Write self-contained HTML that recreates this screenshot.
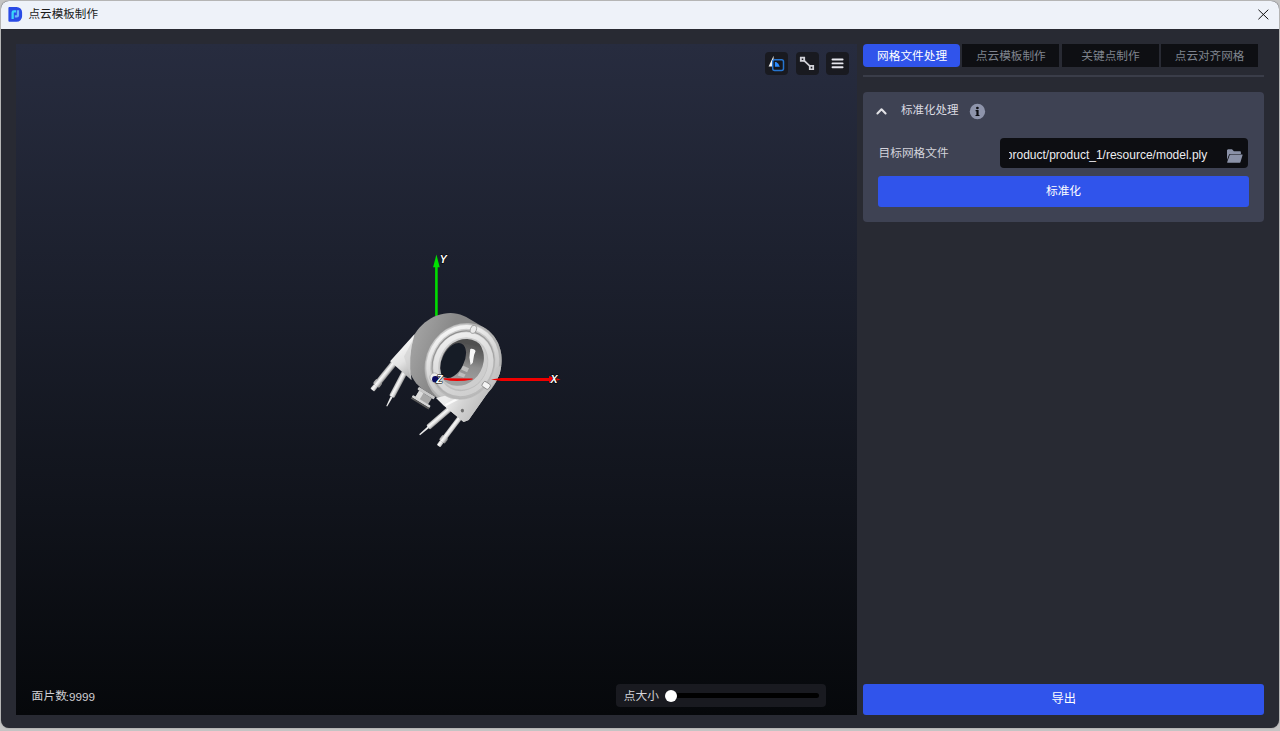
<!DOCTYPE html>
<html lang="zh-CN">
<head>
<meta charset="utf-8">
<title>点云模板制作</title>
<style>
html,body{margin:0;padding:0;}
body{width:1280px;height:731px;overflow:hidden;position:relative;background:#c4c4c4;
  font-family:"Liberation Sans","Noto Sans CJK SC",sans-serif;font-size:12px;}
#win{position:absolute;left:1px;top:1px;width:1278px;height:727.4px;border-radius:8px;
  background:#282a33;overflow:hidden;box-shadow:0 0 1.5px rgba(0,0,0,.4);}
/* everything inside #page is positioned in page pixel coordinates */
#page{position:absolute;left:-1px;top:-1px;width:1280px;height:731px;}
#page>*{position:absolute;}
#titlebar{left:0;top:0;width:1280px;height:29px;background:#eef2f9;}
#viewport{left:16px;top:44px;width:841px;height:671px;
  background:linear-gradient(180deg,#272c3f 0%,#06080b 100%);}
.tbtn{top:52.3px;width:22.5px;height:22.4px;border-radius:4px;background:#191a20;}
.tab{top:44.1px;width:97px;height:22.9px;background:#0e0f13;}
.tab.on{background:#3054eb;border-radius:4px;}
#tabline{left:863px;top:75px;width:401px;height:1.9px;background:#3a3d49;}
#card{left:863px;top:92.3px;width:401px;height:129.7px;border-radius:4px;background:#3e4253;}
#input{left:1000.2px;top:138.3px;width:248px;height:29.6px;border-radius:4px;background:#0d0e12;}
.bbtn{background:#3054eb;border-radius:3px;}
#norm{left:878px;top:176.2px;width:370.5px;height:30.6px;}
#export{left:863px;top:684px;width:401px;height:31px;}
#sliderbox{left:616px;top:684.4px;width:210px;height:22.6px;border-radius:4px;background:#191a20;}
#track{left:668px;top:692.8px;width:150.5px;height:5.6px;border-radius:3px;background:#000;}
#knob{left:665.2px;top:689.5px;width:12px;height:12px;border-radius:50%;background:#fff;}
/* text runs: real text */
.t{overflow:visible;font-family:"Liberation Sans","Noto Sans CJK SC",sans-serif;}
.t>span{position:absolute;left:0;top:-1.2px;white-space:nowrap;line-height:1.2;}
.lat{white-space:nowrap;line-height:1;}
svg{overflow:visible;}
</style>
</head>
<body>
<div id="win"><div id="page">

  <div id="titlebar"></div>
  <div class="t " style="left:28.50px;top:8.75px;width:68.60px;height:10.70px"><span style="font-size:11.59px;color:#1b1b1b">点云模板制作</span></div>

  <div id="viewport"></div>
  <svg id="model" style="left:0;top:0" width="1280" height="731" viewBox="0 0 1280 731">
  <defs>
    <filter id="soft" x="-5%" y="-5%" width="110%" height="110%"><feGaussianBlur stdDeviation="0.45"/></filter>
    <linearGradient id="gBand" gradientUnits="userSpaceOnUse" x1="409" y1="350" x2="440" y2="362">
      <stop offset="0" stop-color="#a2a2a2"/><stop offset=".5" stop-color="#959595"/><stop offset="1" stop-color="#888888"/>
    </linearGradient>
    <linearGradient id="gPinA" gradientUnits="userSpaceOnUse" x1="-2.8" y1="0" x2="2.8" y2="0">
      <stop offset="0" stop-color="#b0b0b0"/><stop offset=".35" stop-color="#fafafa"/><stop offset=".7" stop-color="#dadada"/><stop offset="1" stop-color="#909090"/>
    </linearGradient>
    <linearGradient id="gPlate" gradientUnits="userSpaceOnUse" x1="447" y1="400" x2="478" y2="418">
      <stop offset="0" stop-color="#ececec"/><stop offset=".4" stop-color="#d4d4d4"/><stop offset="1" stop-color="#bcbcbc"/>
    </linearGradient>
    <linearGradient id="gBracket" gradientUnits="userSpaceOnUse" x1="395" y1="345" x2="415" y2="372">
      <stop offset="0" stop-color="#fafafa"/><stop offset=".55" stop-color="#e2e2e2"/><stop offset="1" stop-color="#b4b4b4"/>
    </linearGradient>
    <radialGradient id="gFace" gradientUnits="userSpaceOnUse" cx="448" cy="350" r="62">
      <stop offset="0" stop-color="#d2d2d2"/><stop offset=".62" stop-color="#c4c4c4"/><stop offset="1" stop-color="#adadad"/>
    </radialGradient>
    <linearGradient id="gWall" gradientUnits="userSpaceOnUse" x1="466" y1="340" x2="478" y2="378">
      <stop offset="0" stop-color="#505050"/><stop offset=".3" stop-color="#6c6c6c"/><stop offset=".55" stop-color="#8e8e8e"/><stop offset="1" stop-color="#a0a0a0"/>
    </linearGradient>
    <linearGradient id="gRim" gradientUnits="userSpaceOnUse" x1="428" y1="335" x2="498" y2="388">
      <stop offset="0" stop-color="#fbfbfb"/><stop offset=".4" stop-color="#dedede"/><stop offset="1" stop-color="#c2c2c2" stop-opacity=".3"/>
    </linearGradient>
    <linearGradient id="gGroove" gradientUnits="userSpaceOnUse" x1="430" y1="340" x2="495" y2="385">
      <stop offset="0" stop-color="#8a8a8a"/><stop offset=".6" stop-color="#a6a6a6"/><stop offset="1" stop-color="#c4c4c4" stop-opacity=".5"/>
    </linearGradient>
    <linearGradient id="gRing" gradientUnits="userSpaceOnUse" x1="432" y1="340" x2="492" y2="388">
      <stop offset="0" stop-color="#f4f4f4"/><stop offset=".5" stop-color="#dcdcdc"/><stop offset="1" stop-color="#cccccc"/>
    </linearGradient>
    <clipPath id="cHole"><ellipse cx="463.8" cy="364.3" rx="23.0" ry="26.0" transform="rotate(28.3 463.8 364.3)" /></clipPath>
    <clipPath id="cOutside"><path clip-rule="evenodd" d="M380 300H540V440H380zM491.6 379.4 490.0 382.2 488.1 384.8 486.1 387.2 483.9 389.5 481.6 391.6 479.1 393.5 476.5 395.1 473.8 396.5 471.0 397.7 468.2 398.6 465.3 399.2 462.4 399.6 459.5 399.7 456.6 399.5 453.8 399.1 451.0 398.4 448.3 397.5 445.8 396.2 443.4 394.8 441.1 393.1 439.0 391.2 437.1 389.1 435.4 386.7 433.9 384.3 432.6 381.6 431.5 378.9 430.7 376.0 430.2 373.0 429.8 370.0 429.8 366.9 430.0 363.8 430.4 360.7 431.1 357.6 432.0 354.6 433.2 351.6 434.6 348.8 436.2 346.0 438.1 343.4 440.1 341.0 442.3 338.7 444.6 336.6 447.1 334.7 449.7 333.1 452.4 331.7 455.2 330.5 458.0 329.6 460.9 329.0 463.8 328.6 466.7 328.5 469.6 328.7 472.4 329.1 475.2 329.8 477.9 330.7 480.4 332.0 482.8 333.4 485.1 335.1 487.2 337.0 489.1 339.1 490.8 341.5 492.3 343.9 493.6 346.6 494.7 349.3 495.5 352.2 496.0 355.2 496.4 358.2 496.4 361.3 496.2 364.4 495.8 367.5 495.1 370.6 494.2 373.6 493.0 376.6z"/></clipPath>
  </defs>

  <!-- Y axis (behind model) -->
  <path d="M436.4 266v50" stroke="#00dc00" stroke-width="2.6" fill="none"/>
  <path d="M436.4 254.6l3.3 12.6h-6.6z" fill="#00e000"/>

  <g filter="url(#soft)">
    <!-- upper-left pins (behind bracket) -->
    <g transform="translate(392.8 364.5) rotate(38.8)">
      <rect x="-3.1" y="-2" width="6.2" height="23.5" fill="url(#gPinA)"/>
      <rect x="-3.9" y="21" width="7.8" height="6.2" rx="1.6" fill="url(#gPinA)"/>
      <rect x="-2.5" y="27" width="5" height="5.8" rx=".9" fill="url(#gPinA)"/>
    </g>
    <g transform="translate(403.8 373.8) rotate(27.8)">
      <rect x="-2.9" y="-2" width="5.8" height="28" rx="1.2" fill="url(#gPinA)"/>
      <path d="M-1.1 26h2.2l-.6 10.6h-1z" fill="#ececec"/>
    </g>
    <!-- spool / nozzle -->
    <g transform="translate(423.2 398.2) rotate(31.5)">
      <rect x="-9.6" y="-7.6" width="19.2" height="3.2" rx="1" fill="#c8c8c8"/>
      <rect x="-7.4" y="-4.6" width="14.8" height="7.6" fill="#a8a8a8"/>
      <rect x="-7.4" y="-4.6" width="5" height="7.6" fill="#dcdcdc"/>
      <rect x="-10.4" y="2.6" width="20.8" height="2.6" rx="1" fill="#d6d6d6"/>
      <rect x="-10.4" y="5.2" width="20.8" height="1.6" fill="#5a5a5a"/>
    </g>

    <!-- lower pins (behind plate) -->
    <g transform="translate(448.3 410.1) rotate(49.3)">
      <rect x="-2.9" y="-3" width="5.8" height="29.6" rx="1.2" fill="url(#gPinA)"/>
      <path d="M-1 26.4h2l-.4 11.4h-1.2z" fill="#ececec"/>
    </g>
    <g transform="translate(458.4 419.7) rotate(37.1)">
      <rect x="-2.5" y="-3" width="5" height="24.8" fill="url(#gPinA)"/>
      <rect x="-3.5" y="21.2" width="7" height="6.6" rx="1.5" fill="url(#gPinA)"/>
      <rect x="-2.2" y="27.6" width="4.4" height="5.4" rx=".9" fill="url(#gPinA)"/>
    </g>

    <!-- band (outer cylindrical side): hull of front and back rims -->
    <path d="M407.8 361.1 407.7 357.5 407.9 353.9 408.4 350.3 409.2 346.8 410.3 343.3 411.7 339.9 413.3 336.6 415.1 333.4 417.2 330.4 419.6 327.6 422.1 324.9 424.8 322.5 427.7 320.4 430.7 318.5 433.8 316.8 437.1 315.5 440.4 314.4 443.7 313.7 447.1 313.3 450.4 313.1 453.7 313.3 457.0 313.8 460.2 314.6 463.3 315.7 466.2 317.1 483.1 326.9 485.9 328.6 488.5 330.6 490.9 332.8 493.2 335.2 495.1 337.9 496.9 340.8 498.4 343.8 499.6 347.0 500.5 350.4 501.2 353.8 501.5 357.3 501.6 360.9 501.4 364.5 500.9 368.1 500.1 371.6 499.0 375.1 497.6 378.5 496.0 381.8 494.2 385.0 492.1 388.0 489.7 390.8 487.2 393.5 484.5 395.9 481.6 398.0 478.6 399.9 475.5 401.6 472.2 402.9 468.9 404.0 465.6 404.7 462.2 405.1 458.9 405.3 455.6 405.1 452.3 404.6 449.1 403.8 446.0 402.7 443.1 401.3 426.2 391.5 423.4 389.8 420.8 387.8 418.4 385.6 416.1 383.2 414.2 380.5 412.4 377.6 410.9 374.6 409.7 371.4 408.8 368.0 408.1 364.6z" fill="url(#gBand)"/>

    <!-- left bracket -->
    <path d="M414.6 334L390.1 361.2 411.6 380.2 Q407.4 357 414.6 334z" fill="url(#gBracket)"/>
    <path d="M413.4 339L404 356.5 411.2 379.4Q408 357 413.4 339z" fill="#cfcfcf" opacity=".6"/>

    <!-- lower-right plate -->
    <path d="M442.6 404.4L463.6 422.1 468.7 420 495 382.6C497.6 378.6 499.4 375 500.4 371L470 392z" fill="url(#gPlate)"/>
    <path d="M447.4 405.8L478 389.4 474.6 388.4 445.6 403.2z" fill="#fbfbfb"/>
    <ellipse cx="462.4" cy="410.6" rx="1.6" ry="1.9" fill="#6e6e6e"/>

    <!-- front face : outer rim, groove, inner ring -->
    <ellipse cx="463.1" cy="364.1" rx="37.4" ry="42.2" transform="rotate(28.3 463.1 364.1)" fill="#b2b2b2"/>
    <ellipse cx="462.1" cy="363.2" rx="35.7" ry="40.3" transform="rotate(28.3 462.1 363.2)" fill="url(#gFace)"/>
    <ellipse cx="462.8" cy="363.9" rx="33.5" ry="37.8" transform="rotate(28.3 462.8 363.9)" fill="none" stroke="url(#gRim)" stroke-width="3.8"/>
    <!-- mounting plate, flush with the front face (covers lower-right rim) -->
    <g clip-path="url(#cOutside)"><path d="M436 398L442.6 404.4 463.6 422.1 468.7 420 495 382.600C498.500 377.500 500.600 372 501.200 366L476 372 452 394z" fill="url(#gPlate)"/><path d="M446.200 404.800L476.500 389.200" stroke="#fcfcfc" stroke-width="2.200" stroke-linecap="round" opacity=".95"/></g>
    <ellipse cx="462.4" cy="410.6" rx="1.6" ry="1.9" fill="#707070"/>
    <ellipse cx="463.1" cy="364.1" rx="30.1" ry="34.0" transform="rotate(28.3 463.1 364.1)" fill="none" stroke="url(#gGroove)" stroke-width="1.2"/>
    <ellipse cx="463.3" cy="364.2" rx="26.7" ry="30.2" transform="rotate(28.3 463.3 364.2)" fill="none" stroke="url(#gRing)" stroke-width="5.0"/>
    <!-- boss around Z -->
    <circle cx="434.4" cy="377.4" r="4.5" fill="#ececec" stroke="#a8a8a8" stroke-width=".7"/>
    <!-- hole: lit lower wall, shaded upper wall, see-through lens -->
    <ellipse cx="463.8" cy="364.3" rx="23.0" ry="26.0" transform="rotate(28.3 463.8 364.3)" fill="#cecece"/>
    <g clip-path="url(#cHole)">
      <ellipse cx="460.2" cy="360.5" rx="23.0" ry="26.0" transform="rotate(28.3 460.2 360.5)" fill="url(#gWall)"/>
      <path d="M470.2 349.2c1.9-.9 4.2.1 5.4 1.900l-1.500 3.900-1.300 7.800-2.200 2.200-1.200-7.600z" fill="#f6f6f6"/>
      <path d="M462.800 365.600l6.200 2.600-1.900 4-6-2.600zM459.600 372l6 2.400-1.700 3.100-6.200-2.100z" fill="#bebebe"/>
      <ellipse cx="453.1" cy="360.5" rx="10.9" ry="18.9" transform="rotate(27 453.1 360.5)" fill="#171b26"/>
    </g>

    <!-- small peg -->
    <g transform="translate(486.2 385.4) rotate(33)">
      <rect x="-3.9" y="-2.9" width="7.8" height="5.8" rx="1.8" fill="#f4f4f4" stroke="#808080" stroke-width=".8"/>
    </g>
    <!-- top boss -->
    <ellipse cx="473.4" cy="329.4" rx="3" ry="4.2" transform="rotate(20 473.4 329.4)" fill="#e9e9e9" stroke="#9a9a9a" stroke-width=".8"/>
  </g>

  <!-- X axis -->
  <path d="M443.8 378.2L472.6 378.6 472.6 379.4Q456 382.4 443.8 379.4z" fill="#f00000"/>
  <path d="M491 379.4L501 378H550V381H501z" fill="#f00000"/>
  <path d="M560.6 379.5L549 375.9v7.2z" fill="#ee0000"/>
  <!-- Z axis dot -->
  <circle cx="435.4" cy="379.2" r="3.3" fill="#0a0a62"/>
  <!-- axis labels X / Y / Z -->
  <g font-family="'Liberation Sans', sans-serif" font-size="10.5" font-weight="bold" font-style="italic" fill="#fff" stroke="#000" stroke-width="1.2" paint-order="stroke" stroke-linejoin="round">
    <text x="439.7" y="262.9">Y</text>
    <text x="550.6" y="383">X</text>
    <text x="436.2" y="383.1">Z</text>
  </g>
</svg>


  <div class="tbtn" style="left:765.3px"></div>
  <div class="tbtn" style="left:796.0px"></div>
  <div class="tbtn" style="left:826.3px"></div>

  <div class="tab on" style="left:863px"></div>
  <div class="tab" style="left:962.2px"></div>
  <div class="tab" style="left:1061.5px"></div>
  <div class="tab" style="left:1160.8px"></div>
  <div class="t " style="left:877.10px;top:50.59px;width:68.60px;height:10.83px"><span style="font-size:11.67px;color:#ffffff">网格文件处理</span></div><div class="t " style="left:975.90px;top:50.63px;width:68.90px;height:10.74px"><span style="font-size:11.64px;color:#7f848e">点云模板制作</span></div><div class="t " style="left:1081.30px;top:50.58px;width:57.40px;height:10.84px"><span style="font-size:11.68px;color:#7f848e">关键点制作</span></div><div class="t " style="left:1174.80px;top:50.62px;width:68.90px;height:10.76px"><span style="font-size:11.61px;color:#7f848e">点云对齐网格</span></div>
  <div id="tabline"></div>

  <div id="card"></div>
  <div class="t " style="left:901.00px;top:105.60px;width:56.90px;height:10.60px"><span style="font-size:11.51px;color:#dcdce2">标准化处理</span></div>
  <div class="t " style="left:878.60px;top:147.68px;width:67.70px;height:10.84px"><span style="font-size:11.68px;color:#d4d4dc">目标网格文件</span></div>
  <div id="input"></div>
  <div id="norm" class="bbtn"></div>
  <div class="t " style="left:1045.90px;top:185.60px;width:34.50px;height:10.80px"><span style="font-size:11.74px;color:#ffffff">标准化</span></div>

  <div id="export" class="bbtn"></div>
  <div class="t " style="left:1051.60px;top:693.12px;width:22.50px;height:11.26px"><span style="font-size:12.27px;color:#ffffff">导出</span></div>

  <div class="t " style="left:31.60px;top:689.95px;width:34.40px;height:10.91px"><span style="font-size:11.81px;color:#cfcfd3">面片数</span></div>
  <div class="t" style="left:64px;top:686px;width:36px;height:18px"><span class="lat" style="font-size:11.7px;left:1.8px;top:3.6px;color:#cfcfd3">:9999</span></div>

  <div id="sliderbox"></div>
  <div class="t " style="left:623.70px;top:690.19px;width:34.50px;height:10.82px"><span style="font-size:11.76px;color:#d4d4d8">点大小</span></div>
  <div id="track"></div>
  <div id="knob"></div>

  <svg id="icons" style="left:0;top:0" width="1280" height="731" viewBox="0 0 1280 731">
  <!-- app icon -->
  <path d="M9.4 7h7.2a5.5 5.5 0 0 1 5.5 5.5v3.8a5.5 5.5 0 0 1-5.5 5.5H9.4a1 1 0 0 1-1-1V8a1 1 0 0 1 1-1z" fill="#2a4be6"/>
  <path d="M11.5 18.9v-6.5a2.2 2.2 0 0 1 2.2-2.2h2.4v2.3h-2.0a.3.3 0 0 0-.3.3v6.1z" fill="#38d6f8"/>
  <path d="M19.1 10.2v5.1a2.2 2.2 0 0 1-2.2 2.2h-2.1v-2.3h1.7a.3.3 0 0 0 .3-.3v-4.7z" fill="#6cb6f7"/>
  <!-- close -->
  <path d="M1258.4 9.7l9.9 9.6M1268.3 9.700l-9.900 9.600" stroke="#111" stroke-width="1" fill="none"/>

  <!-- toolbar 1: view / projection -->
  <path d="M773.6 55.8L768.6 66.4H773z" fill="#f4f4f4"/><path d="M773.6 55.800L773 66.400H775.600z" fill="#a9a39a"/>
  <rect x="772.7" y="59.7" width="10.8" height="10.8" rx="2" fill="#15161b" stroke="#2674cf" stroke-width="1.5"/>
  <path d="M774.9 61.9h1.3q2.4 1.100 3.600 4.900h-4.900z" fill="#2b8cff"/>
  <!-- toolbar 2: measure -->
  <path d="M802.5 59.2L811.5 67.6" stroke="#d2d2d8" stroke-width="1.7" fill="none"/>
  <path d="M799.9 56.7h5.2v5h-5.2zM808.9 65.1h5.2v5h-5.2z" fill="#d2d2d8"/>
  <path d="M801.7 58.4h1.600v1.600h-1.600zM810.700 66.800h1.600v1.600h-1.600z" fill="#1c1d24"/>
  <!-- toolbar 3: menu -->
  <path d="M832.5 59.5h10.1M832.5 63.4h10.1M832.5 67.3h10.1" stroke="#e6e6ec" stroke-width="1.9" stroke-linecap="round" fill="none"/>

  <!-- chevron -->
  <path d="M877.4 113.5l4.1-4.3 4.1 4.3" stroke="#e2e2e6" stroke-width="2" stroke-linecap="round" stroke-linejoin="round" fill="none"/>
  <!-- info -->
  <circle cx="977.45" cy="111.5" r="7.7" fill="#8e94ab"/>
  <circle cx="977.4" cy="108.0" r="1.35" fill="#0c0d12"/>
  <path d="M975.6 110.1h3v4.9h.9v1.1h-4v-1.1h.9v-3.8h-.8z" fill="#0c0d12"/>
  <!-- folder -->
  <path d="M1227.9 149.2h4.1l1.9 2.1h6.2a.8.8 0 0 1 .8.8v1.8h-10.7a1.3 1.3 0 0 0-1.2.8l-2 5.2v-9.5a.9.9 0 0 1 .9-.9z" fill="#8b92a8"/>
  <path d="M1230.5 154.4h11.6a.5.5 0 0 1 .5.7l-2.1 7a.8.8 0 0 1-.8.6h-12a.5.5 0 0 1-.5-.7l2.5-7a.9.9 0 0 1 .8-.6z" fill="#8b92a8"/>

  <!-- axis gizmo labels are drawn in model layer -->
</svg>
<div class="t" style="left:1008.6px;top:140px;width:213.4px;height:26px;overflow:hidden"><span class="lat" style="font-size:12px;left:-6.1px;top:7.9px;color:#ececf0">/product/product_1/resource/model.ply</span></div>

</div></div>
</body>
</html>
